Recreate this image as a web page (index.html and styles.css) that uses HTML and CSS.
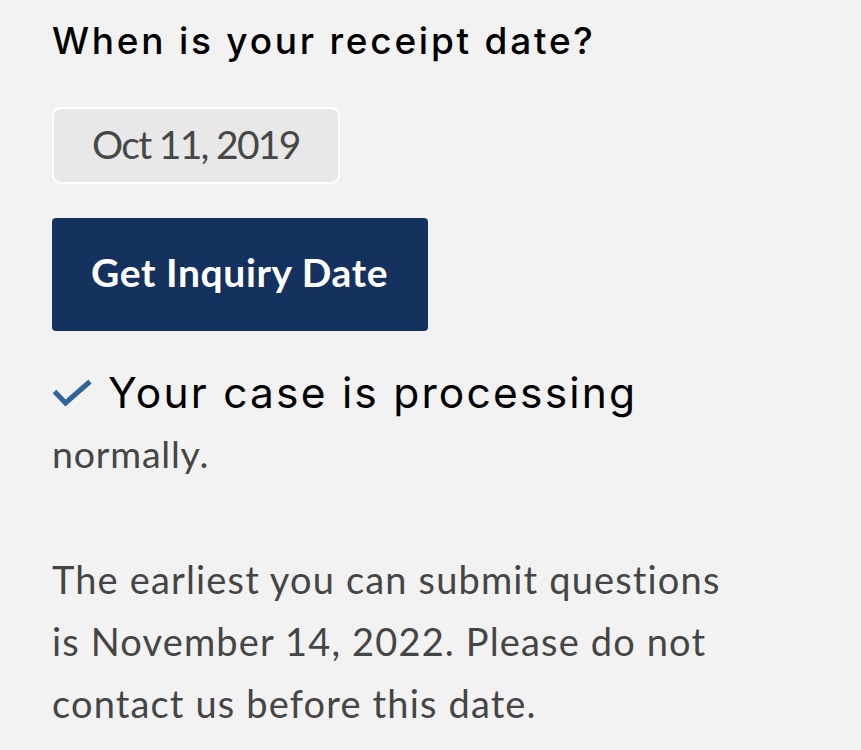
FILE: index.html
```html
<!DOCTYPE html>
<html>
<head>
<meta charset="utf-8">
<link rel="stylesheet" href="styles.css">
</head>
<body>
<main class="page">
  <h2 class="question">When is your receipt date?</h2>
  <div class="date-field">Oct 11, 2019</div>
  <button class="btn">Get Inquiry Date</button>
  <div class="status">
    <svg class="check" viewBox="0 0 40 28" width="40" height="28" aria-hidden="true">
      <path d="M2.5 12.5 L13.5 24 L38 2.5" fill="none" stroke="#2f6699" stroke-width="5"/>
    </svg>
    <span class="status-title">Your case is processing</span>
  </div>
  <p class="normally">normally.</p>
  <p class="info">The earliest you can submit questions is November 14, 2022. Please do not contact us before this date.</p>
</main>
</body>
</html>
```
FILE: styles.css
```css
html, body {
  margin: 0;
  padding: 0;
  background: #f2f2f2;
}
body {
  font-family: "Lato", "Open Sans", sans-serif;
  color: #454545;
}
.page {
  padding: 16px 0 0 52px;
}
.question {
  margin: 0;
  font-family: "Inter", "Lato", sans-serif;
  font-size: 37px;
  font-weight: 500;
  color: #000;
  letter-spacing: 2.75px;
  line-height: 50px;
}
.date-field {
  margin-top: 41px;
  width: 288px;
  height: 77px;
  box-sizing: border-box;
  background: #e8e8e8;
  border: 2px solid #fff;
  border-radius: 9px;
  font-size: 39px;
  line-height: 70px;
  color: #474747;
  padding-left: 38px;
  letter-spacing: -1.7px;
}
.btn {
  display: block;
  margin-top: 34px;
  width: 376px;
  height: 113px;
  background: #15325f;
  color: #fff;
  border: 0;
  border-radius: 4px;
  font-family: inherit;
  font-size: 39px;
  font-weight: 700;
  letter-spacing: 0.6px;
  text-align: left;
  padding: 0 0 5px 39px;
}
.status {
  display: flex;
  align-items: center;
  margin-top: 34px;
  height: 56px;
}
.check {
  margin-right: 16px;
  flex: none;
}
.status-title {
  font-family: "Inter", "Lato", sans-serif;
  font-size: 42.5px;
  line-height: 56px;
  color: #000;
  letter-spacing: 2.2px;
}
.normally {
  margin: 8px 0 0;
  font-size: 37.5px;
  line-height: 50px;
  letter-spacing: 0.8px;
}
.info {
  margin: 69px 0 0;
  width: 690px;
  font-size: 38px;
  line-height: 62px;
  letter-spacing: 1.15px;
}
```
